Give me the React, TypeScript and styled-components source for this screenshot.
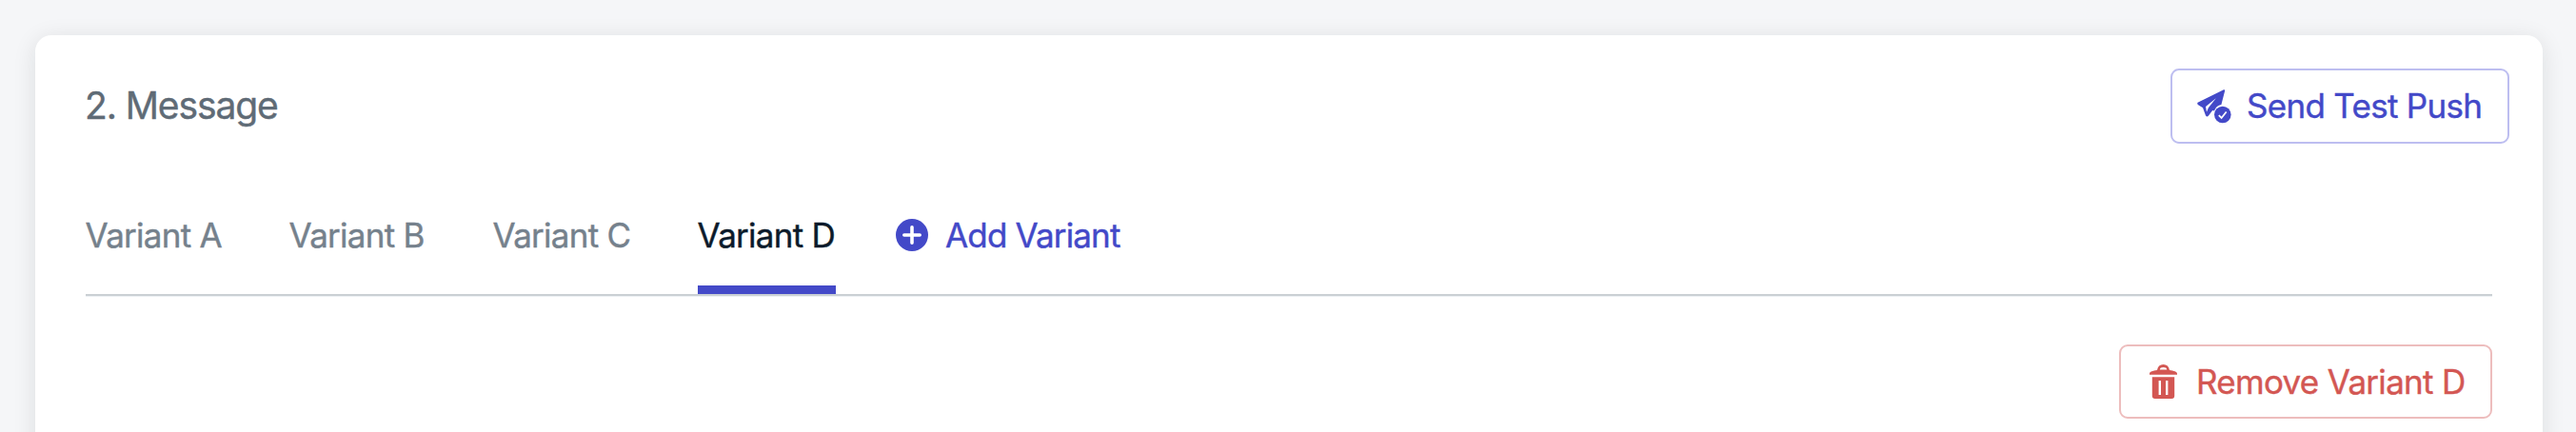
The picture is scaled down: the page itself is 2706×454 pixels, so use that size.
import React from 'react';
import styled, { createGlobalStyle } from 'styled-components';

const GlobalStyle = createGlobalStyle`
  * { box-sizing: border-box; }
  body {
    margin: 0;
    background: #f5f6f8;
    font-family: Inter, "Liberation Sans", sans-serif;
    -webkit-text-stroke: 0.4px currentColor;
    overflow: hidden;
  }
`;

const Page = styled.main`
  height: 454px;
  padding: 37px 35px 0 37px;
  overflow: hidden;
`;

const Card = styled.section`
  height: 480px;
  padding: 35px 53px 0;
  background: #fff;
  border-radius: 17px;
  box-shadow: 0 4px 24px rgba(20, 25, 30, 0.11);
`;

const Header = styled.header`
  display: flex;
  align-items: center;
  justify-content: space-between;
  height: 79px;
  margin-right: -18px;
`;

const Title = styled.h2`
  margin: -2px 0 0 -1px;
  color: #5f6b76;
  font-size: 39px;
  line-height: 48px;
  font-weight: 400;
  letter-spacing: -1.1px;
`;

const OutlineButton = styled.button<{ $color: string; $border: string; $width: number; $height: number; $gap: number; $inset: number }>`
  display: flex;
  align-items: center;
  gap: ${p => p.$gap}px;
  width: ${p => p.$width}px;
  height: ${p => p.$height}px;
  padding: 0 0 0 ${p => p.$inset}px;
  background: #fff;
  border: 2px solid ${p => p.$border};
  border-radius: 9px;
  color: ${p => p.$color};
  font: 400 35px/44px Inter, "Liberation Sans", sans-serif;
  letter-spacing: -0.7px;
  white-space: nowrap;

  svg { flex: none; }
`;

const ButtonLabel = styled.span`
  padding-bottom: 2px;
`;

const Tabs = styled.nav`
  display: flex;
  height: 160px;
  border-bottom: 2px solid #cad0d4;
  box-shadow: 0 1px 0 #edf1f4;
`;

const Tab = styled.button<{ $active?: boolean; $width: number }>`
  display: flex;
  align-items: center;
  width: ${p => p.$width}px;
  height: 158px;
  margin: 0 ${p => (p.$active ? 63 : 71)}px 0 0;
  padding: 42px 0 0;
  border: 0;
  border-bottom: 9px solid ${p => (p.$active ? '#4349c8' : 'transparent')};
  background: none;
  color: ${p => (p.$active ? '#0c1b2b' : '#75818c')};
  font: 400 35px/44px Inter, "Liberation Sans", sans-serif;
  letter-spacing: -0.72px;
  text-indent: -0.5px;
  white-space: nowrap;
`;

const AddTab = styled.button`
  display: flex;
  align-items: center;
  gap: 18px;
  height: 149px;
  padding: 42px 0 0;
  border: 0;
  background: none;
  color: #4349c8;
  font: 400 35px/44px Inter, "Liberation Sans", sans-serif;
  letter-spacing: -0.85px;
  white-space: nowrap;
`;

const Actions = styled.div`
  display: flex;
  justify-content: flex-end;
  padding-top: 51px;
`;

const SendIcon = () => (
  <svg width="36" height="36" viewBox="0 0 36 36">
    <path d="M28 .3 L.6 13.8 Q-.2 15 .8 16 L6 19.2 L9 27.4 Q10.4 29.4 12 27.6 L16.2 22 L18 22.4 Q20.1 17 25.4 16 L29.2 1.2 Q29.2 0 28 .3 Z" fill="currentColor" />
    <path d="M19.8 9.3 L9 18 L10 23.8 L11.9 19.2 Z" fill="#fff" />
    <circle cx="26.8" cy="26.5" r="8.8" fill="currentColor" />
    <path d="M22.8 27.2 25.6 30 30.7 23.5" fill="none" stroke="#fff" strokeWidth="1.8" />
  </svg>
);

const TrashIcon = () => (
  <svg width="29" height="36" viewBox="0 0 29 36">
    <path fill="currentColor" fillRule="evenodd" d="M0 10.8V9.5C0 7.8 3.5 6.6 8 6C8.6 2 10.8 0 14.5 0S20.4 2 21 6C25.5 6.6 29 7.8 29 9.5V10.8ZM10.8 5.4H18.2Q17.8 3 14.5 3T10.8 5.4Z" />
    <path fill="currentColor" fillRule="evenodd" d="M2.8 13.3H26.2V33Q26.2 36 23.2 36H5.8Q2.8 36 2.8 33ZM9.6 17V32H12V17ZM17 17V32H19.4V17Z" />
  </svg>
);

const PlusIcon = () => (
  <svg width="34" height="34" viewBox="0 0 34 34">
    <circle cx="17" cy="17" r="17" fill="currentColor" />
    <path d="M17 8.8V25.2M8.8 17H25.2" stroke="#fff" strokeWidth="3.6" strokeLinecap="round" />
  </svg>
);

export default function App() {
  return (
    <>
      <GlobalStyle />
      <Page>
        <Card>
          <Header>
            <Title>2. Message</Title>
            <OutlineButton $color="#4349c8" $border="#bdbef0" $width={356} $height={79} $inset={26} $gap={16}>
              <SendIcon />
              <ButtonLabel>Send Test Push</ButtonLabel>
            </OutlineButton>
          </Header>
          <Tabs>
            <Tab $width={143}>Variant A</Tab>
            <Tab $width={143}>Variant B</Tab>
            <Tab $width={144}>Variant C</Tab>
            <Tab $width={145} $active>Variant D</Tab>
            <AddTab>
              <PlusIcon />
              Add Variant
            </AddTab>
          </Tabs>
          <Actions>
            <OutlineButton $color="#d35753" $border="#edbdbd" $width={392} $height={78} $inset={30} $gap={20}>
              <TrashIcon />
              Remove Variant D
            </OutlineButton>
          </Actions>
        </Card>
      </Page>
    </>
  );
}
